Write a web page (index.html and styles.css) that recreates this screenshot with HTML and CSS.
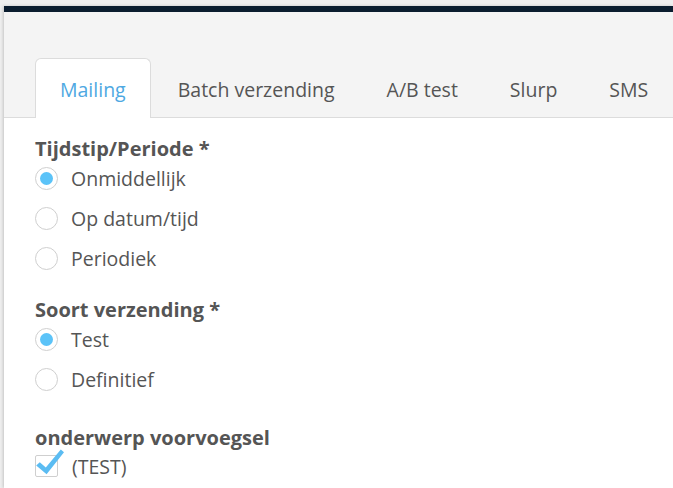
FILE: index.html
```html
<!DOCTYPE html>
<html lang="nl">
<head>
<meta charset="utf-8">
<title>Verzending</title>
<link rel="stylesheet" href="styles.css">
</head>
<body>
<div class="panel">
  <div class="topbar"></div>
  <div class="header">
    <ul class="tabs">
      <li class="tab active">Mailing</li>
      <li class="tab">Batch verzending</li>
      <li class="tab">A/B test</li>
      <li class="tab">Slurp</li>
      <li class="tab">SMS</li>
    </ul>
  </div>
  <div class="content">
    <div class="group g1">
      <div class="label">Tijdstip/Periode *</div>
      <div class="option"><span class="radio checked"></span><span>Onmiddellijk</span></div>
      <div class="option"><span class="radio"></span><span>Op datum/tijd</span></div>
      <div class="option"><span class="radio"></span><span>Periodiek</span></div>
    </div>
    <div class="group g2">
      <div class="label">Soort verzending *</div>
      <div class="option"><span class="radio checked"></span><span>Test</span></div>
      <div class="option"><span class="radio"></span><span>Definitief</span></div>
    </div>
    <div class="group g3">
      <div class="label">onderwerp voorvoegsel</div>
      <div class="option check-row">
        <span class="checkbox">
          <svg class="tick" width="22" height="21" viewBox="0 0 22 21" aria-hidden="true">
            <path d="M1.2 10.6 L4.8 7.2 L10.8 12.6 L25.8 -5.6 L29 -2.8 L11.6 19.2 Z" fill="#5bbcf2"/>
          </svg>
        </span>
        <span>(TEST)</span>
      </div>
    </div>
  </div>
</div>
</body>
</html>
```
FILE: styles.css
```css
* { box-sizing: border-box; }
html, body { margin: 0; padding: 0; }
body {
  background: #efefef;
  font-family: "Open Sans", "Liberation Sans", sans-serif;
  color: #555;
  height: 488px;
  overflow: hidden;
}
.panel {
  margin: 6px 0 0 4px;
  box-shadow: -1px 0 3px rgba(0,0,0,0.18);
  background: #fff;
  min-height: 482px;
}
.topbar {
  height: 6px;
  background: #0b1d2f;
}
.header {
  background: #f4f4f4;
  height: 106px;
  border-bottom: 1px solid #dcdcdc;
  display: flex;
  align-items: flex-end;
  padding-left: 31px;
}
.tabs {
  list-style: none;
  margin: 0 0 -1px 0;
  padding: 0;
  display: flex;
  gap: 2px;
}
.tab {
  font-size: 19.5px;
  line-height: 26px;
  padding: 18px 24px 15px;
  border: 1px solid transparent;
  border-bottom: none;
  border-radius: 6px 6px 0 0;
  color: #555;
  white-space: nowrap;
}
.tab.active {
  background: #fff;
  border-color: #dcdcdc;
  color: #4ea8e2;
}
.content {
  padding: 19px 0 0 31px;
}
.label {
  font-size: 20px;
  line-height: 24px;
  font-weight: 700;
  color: #555;
}
.option {
  display: flex;
  align-items: center;
  gap: 13px;
  height: 34px;
  margin-bottom: 6px;
  font-size: 19.5px;
}
.radio {
  width: 23px;
  height: 23px;
  border: 1px solid #cfcfcf;
  border-radius: 50%;
  background: #fff;
  display: flex;
  align-items: center;
  justify-content: center;
  flex: none;
}
.radio.checked::after {
  content: "";
  width: 13px;
  height: 13px;
  border-radius: 50%;
  background: #5bc3f8;
}
.g2 { margin-top: 23px; }
.g3 { margin-top: 30px; }
.check-row { height: 32px; margin-bottom: 0; gap: 14px; }
.checkbox {
  position: relative;
  width: 23px;
  height: 22px;
  border: 1px solid #cfcfcf;
  border-radius: 2px;
  background: #fff;
  flex: none;
}
.tick {
  position: absolute;
  left: -1px;
  top: -1px;
  overflow: visible;
}
```
